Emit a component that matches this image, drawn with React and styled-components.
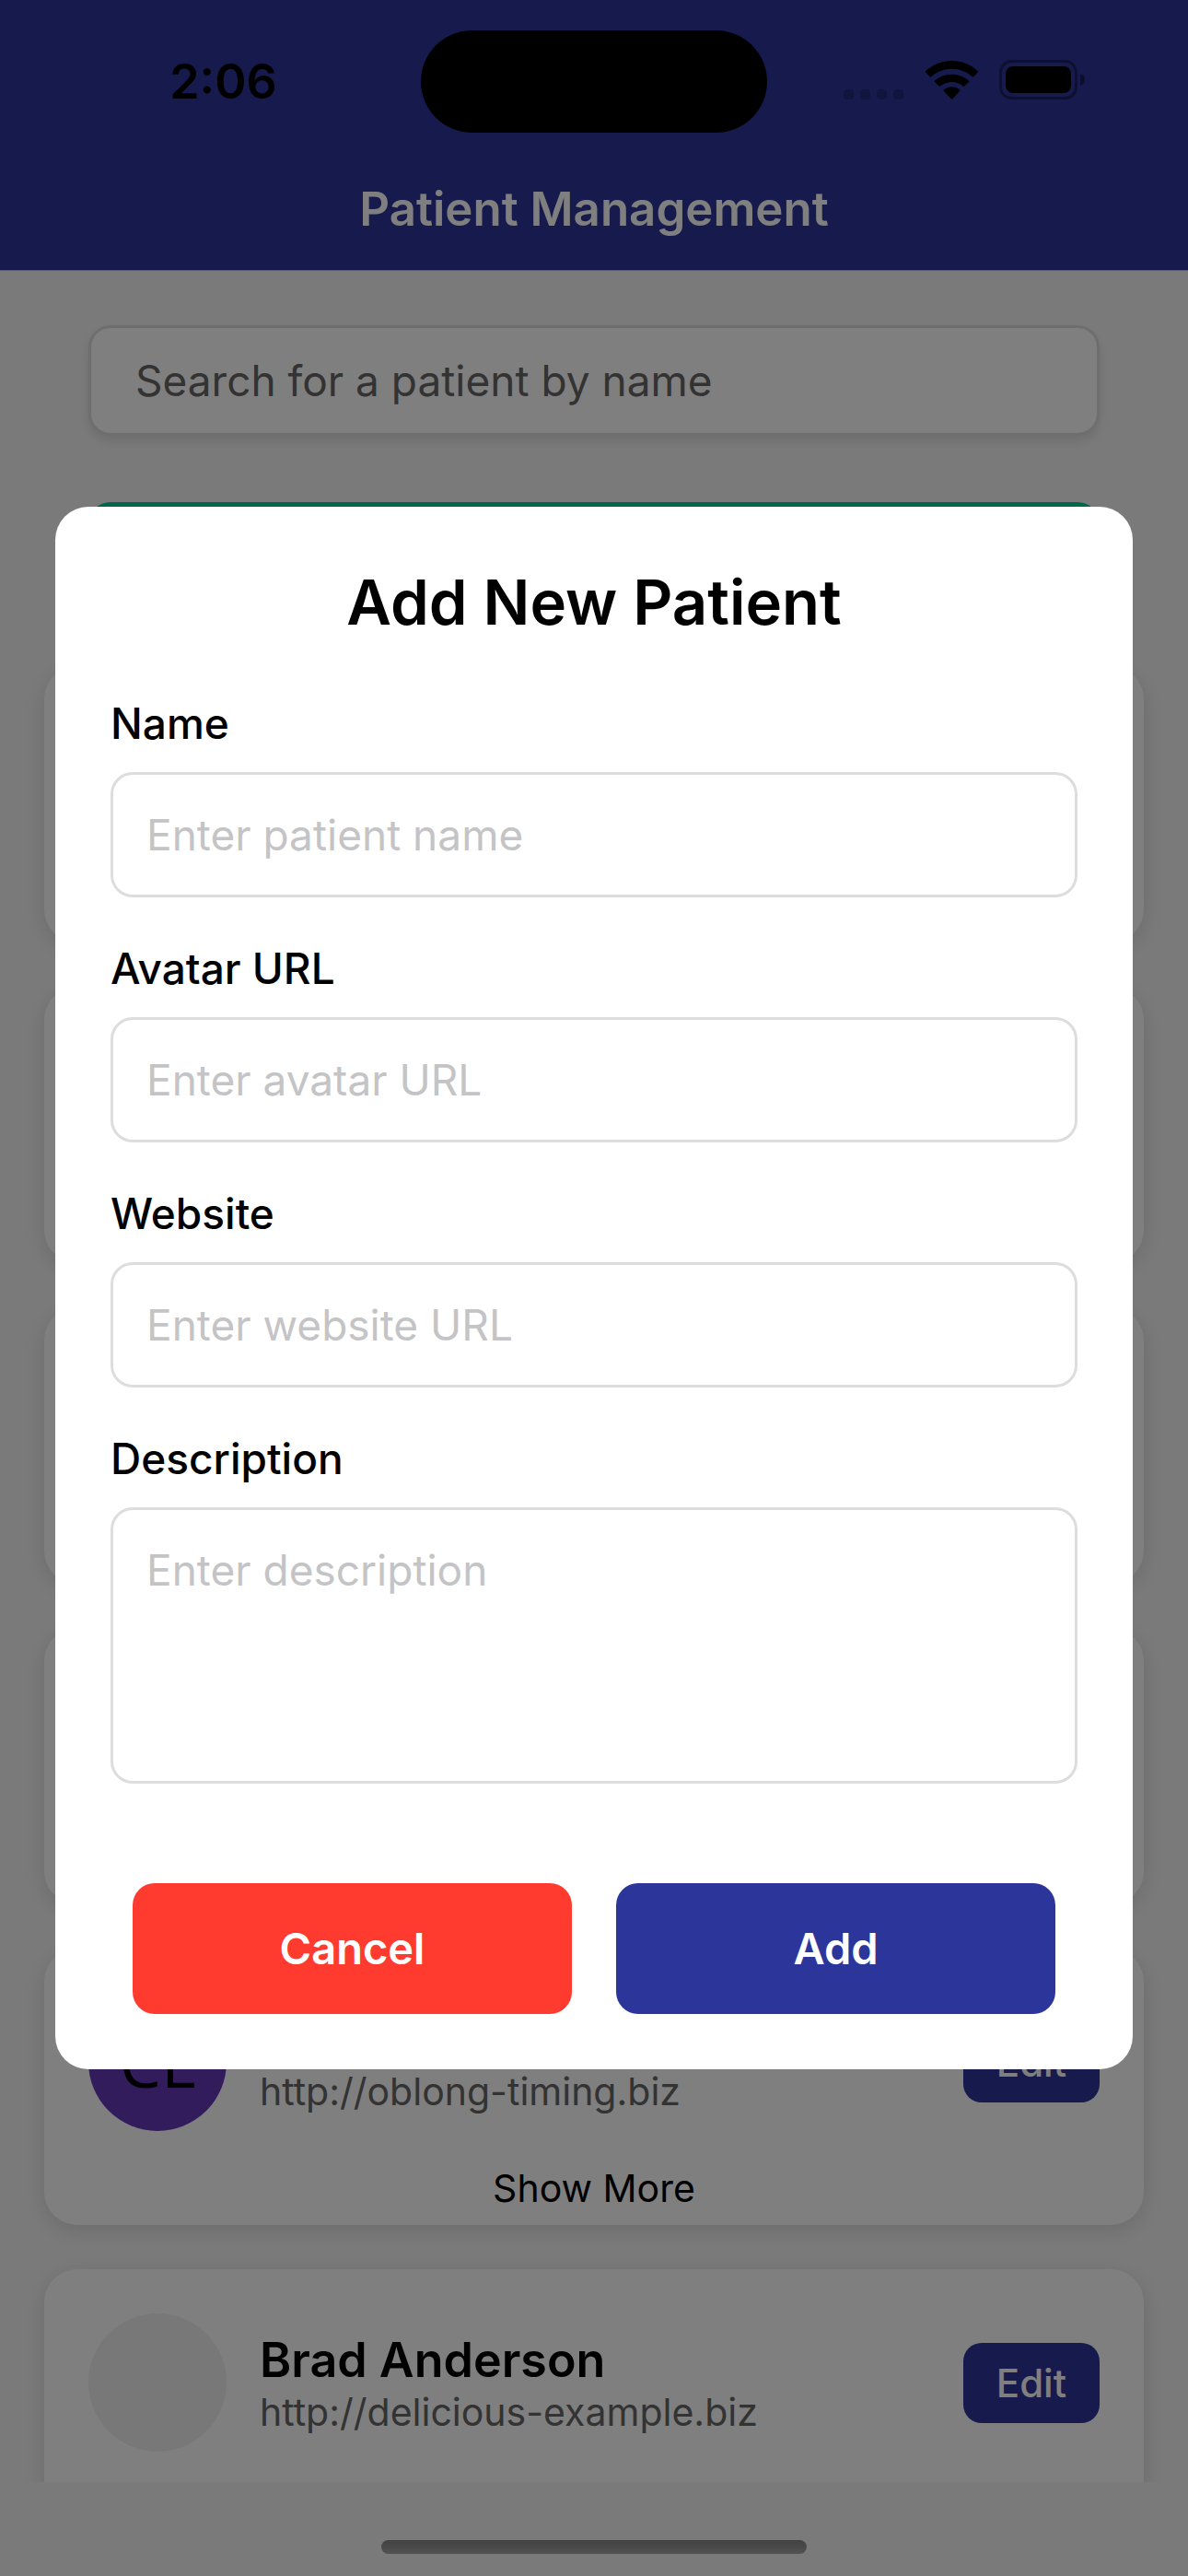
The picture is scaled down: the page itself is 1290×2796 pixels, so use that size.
import React from 'react';
import styled, { createGlobalStyle } from 'styled-components';

const GlobalStyle = createGlobalStyle`
  *, *::before, *::after {
    box-sizing: border-box;
  }

  body {
    margin: 0;
    background: #f5f5f5;
    color: #000;
    font-family: Inter, "Liberation Sans", sans-serif;
  }

  button, input, textarea {
    margin: 0;
    font-family: inherit;
  }
`;

const Screen = styled.div`
  display: flex;
  flex-direction: column;
  height: 100vh;
  overflow: hidden;
`;

const Header = styled.header`
  flex: none;
  background: #2c3599;
  border-bottom: 1px solid #b8b8b8;
`;

const StatusBar = styled.div`
  display: grid;
  grid-template-columns: 1fr auto 1fr;
  align-items: center;
  height: 177px;
`;

const Clock = styled.time`
  padding-left: 28px;
  text-align: center;
  font-size: 52px;
  line-height: 60px;
  font-weight: 600;
`;

const Island = styled.div`
  width: 376px;
  height: 111px;
  border-radius: 56px;
  background: #000;
`;

const StatusIcons = styled.div`
  display: flex;
  justify-content: center;
  align-items: flex-end;
  gap: 23px;
  padding: 0 30px 4px 0;
`;

const ScreenTitle = styled.h1`
  margin: 0;
  padding: 20px 0 36px;
  color: #fff;
  text-align: center;
  font-size: 51px;
  line-height: 60px;
  font-weight: 600;
`;

const Toolbar = styled.div`
  flex: none;
  display: flex;
  flex-direction: column;
  gap: 72px;
  padding: 59px 96px 0;
`;

const SearchInput = styled.input`
  width: 100%;
  height: 120px;
  padding: 0 48px;
  border: 3px solid #ddd;
  border-radius: 24px;
  background: #fff;
  box-shadow: 0 6px 12px rgba(0, 0, 0, 0.1);
  font-size: 46px;

  &::placeholder {
    color: #666;
    opacity: 1;
  }
`;

const AddPatientButton = styled.button`
  height: 130px;
  border: 0;
  border-radius: 24px;
  background: #00cc99;
  color: #fff;
  font-size: 46px;
  font-weight: 600;
`;

const PatientList = styled.ul`
  flex: 1;
  min-height: 0;
  overflow: hidden;
  display: flex;
  flex-direction: column;
  gap: 48px;
  margin: 0;
  padding: 48px 48px 0;
  list-style: none;
`;

const Card = styled.li`
  flex: none;
  display: flex;
  flex-direction: column;
  gap: 38px;
  min-height: 300px;
  padding: 48px 48px 16px;
  border-radius: 36px;
  background: #fff;
  box-shadow: 0 6px 24px rgba(0, 0, 0, 0.12);
`;

const CardRow = styled.div`
  display: flex;
  align-items: center;
  gap: 36px;
`;

const Avatar = styled.div`
  flex: none;
  display: grid;
  place-items: center;
  width: 150px;
  height: 150px;
  border-radius: 50%;
  background: ${({ $tone }) => $tone || '#f0f0f0'};
  font: 400 72px "Open Sans", "Noto Sans", sans-serif;
`;

const PatientInfo = styled.div`
  flex: 1;
  min-width: 0;
  padding-top: 4px;
`;

const PatientName = styled.h2`
  margin: 0;
  min-height: 60px;
  font-size: 52px;
  line-height: 60px;
  font-weight: 600;
`;

const PatientLink = styled.a`
  display: block;
  color: #666;
  text-decoration: none;
  font-size: 41px;
  line-height: 52px;
`;

const EditButton = styled.button`
  padding: 18px 36px;
  border: 0;
  border-radius: 20px;
  background: #2c3599;
  color: #fff;
  font-size: 42px;
  line-height: 51px;
  font-weight: 500;
`;

const ShowMore = styled.button`
  align-self: center;
  padding: 0;
  border: 0;
  background: none;
  color: #000;
  font-size: 41px;
  line-height: 48px;
`;

const BottomInset = styled.div`
  flex: none;
  height: 102px;
`;

const Overlay = styled.div`
  position: fixed;
  inset: 0;
  display: flex;
  align-items: center;
  justify-content: center;
  padding: 0 60px;
  background: rgba(0, 0, 0, 0.5);
`;

const Dialog = styled.form`
  width: 100%;
  padding: 60px;
  border-radius: 36px;
  background: #fff;
`;

const DialogTitle = styled.h2`
  margin: 0 0 58px;
  text-align: center;
  font-size: 67px;
  line-height: 88px;
  font-weight: 600;
`;

const Fields = styled.div`
  display: flex;
  flex-direction: column;
  gap: 48px;
`;

const Field = styled.div`
  display: flex;
  flex-direction: column;
  gap: 24px;
`;

const Label = styled.label`
  font-size: 46px;
  line-height: 58px;
  font-weight: 500;
`;

const TextInput = styled.input`
  width: 100%;
  height: ${({ $tall }) => ($tall ? 300 : 136)}px;
  padding: 36px;
  border: 3px solid #ddd;
  border-radius: 24px;
  background: #fff;
  font-size: 46px;
  line-height: 58px;
  resize: none;

  &::placeholder {
    color: #c4c4c6;
    opacity: 1;
  }
`;

const Actions = styled.div`
  display: flex;
  gap: 48px;
  margin-top: 108px;
  padding: 0 24px;
`;

const ActionButton = styled.button`
  flex: 1;
  height: 142px;
  padding: 0 0 2px;
  border: 0;
  border-radius: 24px;
  background: ${({ $danger }) => ($danger ? '#ff3b30' : '#2c3599')};
  color: #fff;
  font-size: 47px;
  font-weight: 600;
`;

const HomeIndicator = styled.div`
  position: fixed;
  bottom: 24px;
  left: 50%;
  width: 462px;
  height: 15px;
  border-radius: 8px;
  background: linear-gradient(#424242, #525252);
  transform: translateX(-50%);
`;

const patients = [
  { id: 1 },
  { id: 2 },
  { id: 3 },
  { id: 4 },
  { id: 5, initials: 'CL', tone: '#6638b8', website: 'http://oblong-timing.biz', expandable: true },
  { id: 6, name: 'Brad Anderson', website: 'http://delicious-example.biz' },
];

const fields = [
  { id: 'name', label: 'Name', placeholder: 'Enter patient name' },
  { id: 'avatar', label: 'Avatar URL', placeholder: 'Enter avatar URL' },
  { id: 'website', label: 'Website', placeholder: 'Enter website URL' },
  { id: 'description', label: 'Description', placeholder: 'Enter description', tall: true },
];

function CellularDots() {
  return (
    <svg width="66" height="11" viewBox="0 0 66 11" fill="#000" fillOpacity="0.2" aria-hidden="true">
      {[0, 18, 36, 54].map((x) => (
        <rect key={x} x={x} width="11" height="11" rx="4" />
      ))}
    </svg>
  );
}

function WifiIcon() {
  return (
    <svg width="57" height="42" viewBox="0 0 57 42" aria-hidden="true">
      <path d="M.3 12.600a1 1 0 0 1 0-1.500C16-3.700 41-3.700 56.700 11.100a1 1 0 0 1 0 1.500l-4.500 4.700a1 1 0 0 1-1.500 0C38 5.900 19 5.900 6.300 17.300a1 1 0 0 1-1.500 0z" />
      <path d="M10 23a1 1 0 0 1 0-1.500c10.500-9 26.500-9 37 0a1 1 0 0 1 0 1.500l-4.600 4.600a1 1 0 0 1-1.500 0c-7.400-6.200-17.400-6.200-24.800 0a1 1 0 0 1-1.500 0z" />
      <path d="M20 32.900a1 1 0 0 1 0-1.600c5-4 12-4 17 0a1 1 0 0 1 0 1.600l-7.700 8.400a1 1 0 0 1-1.500 0z" />
    </svg>
  );
}

function BatteryIcon() {
  return (
    <svg width="93" height="43" viewBox="0 0 93 43" aria-hidden="true">
      <rect x="1.500" y="1.500" width="82" height="40" rx="12" fill="none" stroke="#000" strokeOpacity="0.38" strokeWidth="3" />
      <rect x="7" y="7" width="71" height="29" rx="8" />
      <path d="M88 15c3.300 1 5 3.500 5 6.500s-1.700 5.500-5 6.500z" fillOpacity="0.45" />
    </svg>
  );
}

function PatientCard({ patient }) {
  return (
    <Card>
      <CardRow>
        <Avatar $tone={patient.tone}>{patient.initials}</Avatar>
        <PatientInfo>
          <PatientName>{patient.name}</PatientName>
          {patient.website && <PatientLink href={patient.website}>{patient.website}</PatientLink>}
        </PatientInfo>
        <EditButton type="button">Edit</EditButton>
      </CardRow>
      {patient.expandable && <ShowMore type="button">Show More</ShowMore>}
    </Card>
  );
}

export default function App() {
  return (
    <>
      <GlobalStyle />
      <Screen>
        <Header>
          <StatusBar>
            <Clock>2:06</Clock>
            <Island />
            <StatusIcons>
              <CellularDots />
              <WifiIcon />
              <BatteryIcon />
            </StatusIcons>
          </StatusBar>
          <ScreenTitle>Patient Management</ScreenTitle>
        </Header>
        <Toolbar>
          <SearchInput type="search" aria-label="Search for a patient by name" placeholder="Search for a patient by name" />
          <AddPatientButton type="button" aria-label="Add new patient" />
        </Toolbar>
        <PatientList>
          {patients.map((patient) => (
            <PatientCard key={patient.id} patient={patient} />
          ))}
        </PatientList>
        <BottomInset />
      </Screen>
      <Overlay>
        <Dialog role="dialog" aria-modal="true" aria-labelledby="dialog-title" onSubmit={(event) => event.preventDefault()}>
          <DialogTitle id="dialog-title">Add New Patient</DialogTitle>
          <Fields>
            {fields.map(({ id, label, placeholder, tall }) => (
              <Field key={id}>
                <Label htmlFor={id}>{label}</Label>
                <TextInput
                  as={tall ? 'textarea' : 'input'}
                  id={id}
                  name={id}
                  placeholder={placeholder}
                  $tall={tall}
                />
              </Field>
            ))}
          </Fields>
          <Actions>
            <ActionButton type="button" $danger>Cancel</ActionButton>
            <ActionButton type="submit">Add</ActionButton>
          </Actions>
        </Dialog>
      </Overlay>
      <HomeIndicator />
    </>
  );
}
